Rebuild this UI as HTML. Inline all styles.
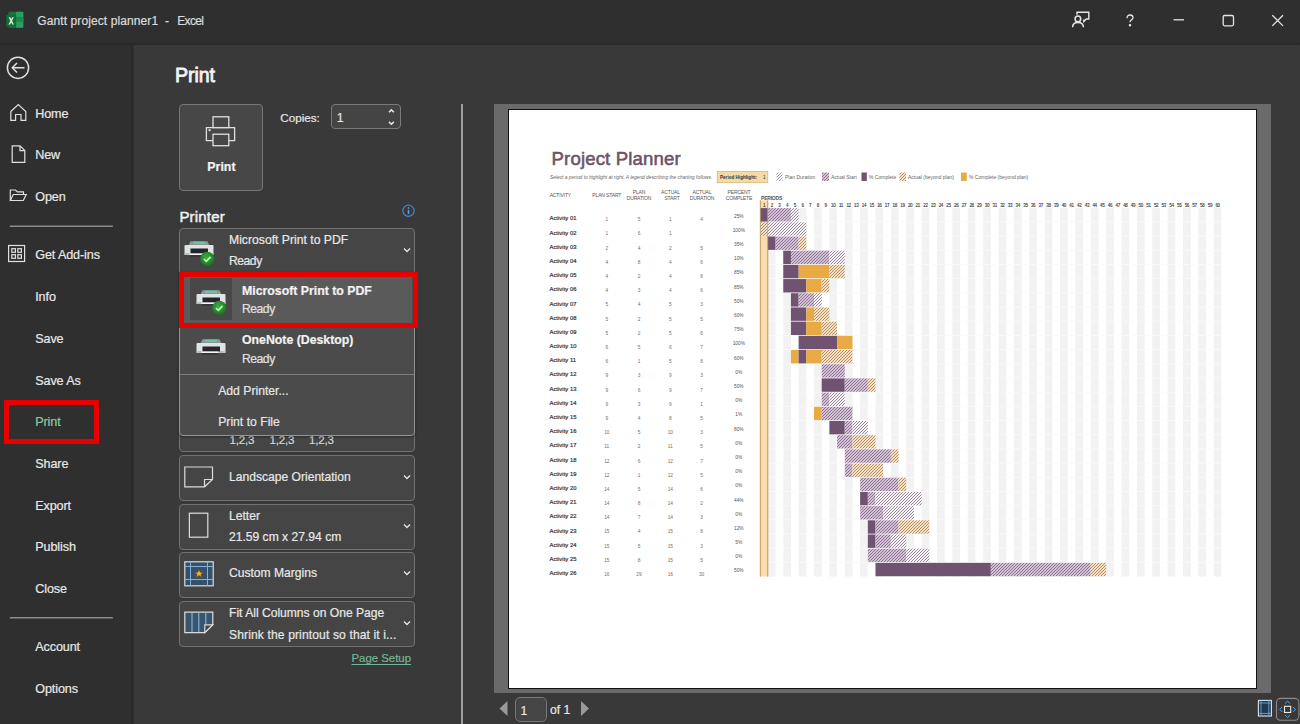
<!DOCTYPE html>
<html><head><meta charset="utf-8"><style>
html,body{margin:0;padding:0;width:1300px;height:724px;overflow:hidden;background:#383838;font-family:"Liberation Sans", sans-serif;}
.r{position:absolute;}
.t{position:absolute;white-space:nowrap;-webkit-text-stroke:0.2px currentColor;}
</style></head><body>
<div class="r" style="left:0px;top:0px;width:1300px;height:45px;background:#2f2f2f;"></div>
<div class="r" style="left:0px;top:45px;width:133px;height:679px;background:#2f2f2f;"></div>
<div class="r" style="left:133px;top:45px;width:1167px;height:679px;background:#393939;"></div>
<div class="r" style="left:0px;top:42px;width:1300px;height:3px;background:linear-gradient(#2f2f2f,#262626);"></div>
<div class="r" style="left:130px;top:45px;width:4px;height:679px;background:linear-gradient(90deg,#2f2f2f,#282828 60%,#333);"></div>
<svg class="r" style="left:5px;top:10px" width="20" height="20" viewBox="0 0 20 20">
<rect x="3.3" y="1.8" width="15" height="16" rx="1.2" fill="#17753f"/>
<rect x="11" y="1.8" width="7.3" height="16" rx="1" fill="#2a9e5e"/>
<rect x="11" y="7" width="7.3" height="5" fill="#1f8a50"/>
<rect x="1.2" y="5" width="10" height="11.6" rx="1" fill="#0f6e3a"/>
<path d="M3.6 7.2 L5.2 7.2 L6.2 9.3 L7.2 7.2 L8.8 7.2 L7.0 10.8 L8.9 14.4 L7.3 14.4 L6.2 12.2 L5.1 14.4 L3.5 14.4 L5.4 10.8 Z" fill="#d8f5e0"/>
</svg><div class="t" style="left:37.30px;top:14.94px;font-size:12px;line-height:12px;color:#dcdcdc;letter-spacing:0.1px;">Gantt project planner1</div>
<div class="t" style="left:165.00px;top:14.94px;font-size:12px;line-height:12px;color:#dcdcdc;">-</div>
<div class="t" style="left:177.20px;top:14.94px;font-size:12px;line-height:12px;color:#dcdcdc;letter-spacing:-0.65px;">Excel</div>
<svg class="r" style="left:1060px;top:0px" width="240" height="45" viewBox="0 0 240 45" fill="none" stroke="#e6e6e6" stroke-width="1.3">
<path d="M17 14.8 V12.3 H28.8 V19 H26.3 L23.8 21.6 V19.6" stroke-width="1.4"/>
<circle cx="17.9" cy="18.9" r="2.8" stroke-width="1.5"/>
<path d="M12.6 27.3 C12.6 24.2 15 22.5 18 22.5 C21 22.5 23.4 24.2 23.4 27.3" stroke-width="1.5"/>
<path d="M67 18.2 C67 15.8 68.5 15 70 15 C71.6 15 73 16 73 17.7 C73 19.6 70 20 70 22.3" />
<circle cx="70" cy="25.2" r="0.6" fill="#e6e6e6"/>
<path d="M113.5 19.8 H124"/>
<rect x="163.2" y="15.5" width="10.3" height="10.3" rx="1.5"/>
<path d="M212.3 15.2 L223 25.9 M223 15.2 L212.3 25.9"/>
</svg><svg class="r" style="left:0px;top:45px" width="133" height="679" viewBox="0 45 133 679" fill="none" stroke="#e0e0e0" stroke-width="1.2">
<circle cx="18" cy="67.8" r="10.6" stroke-width="1.5"/>
<path d="M12.5 67.8 H24.5 M17 63 L12.3 67.8 L17 72.6" stroke-width="1.5"/>
<path d="M10.8 111.5 L18.3 104.5 L25.8 111.5 V120.3 H21 V114.5 H15.6 V120.3 H10.8 Z"/>
<path d="M12.2 145.8 H20 L24.8 150.6 V162.3 H12.2 Z M20 145.8 V150.6 H24.8"/>
<path d="M10.3 200.5 V190 H15.5 L17.3 191.8 H23.5 V194.5 M10.3 200.5 L13.3 194.5 H26.2 L23.3 200.5 Z"/>
<path d="M9.8 226.3 H112.8" stroke="#8c8c8c" stroke-width="1.6"/>
<rect x="8.6" y="245.5" width="16" height="16"/>
<rect x="11.8" y="248.7" width="3.6" height="3.6"/><rect x="17.8" y="248.7" width="3.6" height="3.6"/>
<rect x="11.8" y="254.7" width="3.6" height="3.6"/><rect x="17.8" y="254.7" width="3.6" height="3.6"/>
<path d="M9.8 617.8 H112.8" stroke="#8c8c8c" stroke-width="1.6"/>
</svg><div class="t" style="left:35.20px;top:107.73px;font-size:12.6px;line-height:12.6px;color:#e8e8e8;letter-spacing:-0.1px;">Home</div>
<div class="t" style="left:35.20px;top:148.83px;font-size:12.6px;line-height:12.6px;color:#e8e8e8;letter-spacing:-0.1px;">New</div>
<div class="t" style="left:35.20px;top:190.93px;font-size:12.6px;line-height:12.6px;color:#e8e8e8;letter-spacing:-0.1px;">Open</div>
<div class="t" style="left:35.20px;top:248.93px;font-size:12.6px;line-height:12.6px;color:#e8e8e8;letter-spacing:-0.1px;">Get Add-ins</div>
<div class="t" style="left:35.20px;top:291.13px;font-size:12.6px;line-height:12.6px;color:#e8e8e8;letter-spacing:-0.1px;">Info</div>
<div class="t" style="left:35.20px;top:333.03px;font-size:12.6px;line-height:12.6px;color:#e8e8e8;letter-spacing:-0.1px;">Save</div>
<div class="t" style="left:35.20px;top:374.93px;font-size:12.6px;line-height:12.6px;color:#e8e8e8;letter-spacing:-0.1px;">Save As</div>
<div class="t" style="left:35.20px;top:415.73px;font-size:12.6px;line-height:12.6px;color:#8fc9a5;letter-spacing:-0.1px;">Print</div>
<div class="t" style="left:35.20px;top:458.13px;font-size:12.6px;line-height:12.6px;color:#e8e8e8;letter-spacing:-0.1px;">Share</div>
<div class="t" style="left:35.20px;top:499.53px;font-size:12.6px;line-height:12.6px;color:#e8e8e8;letter-spacing:-0.1px;">Export</div>
<div class="t" style="left:35.20px;top:541.03px;font-size:12.6px;line-height:12.6px;color:#e8e8e8;letter-spacing:-0.1px;">Publish</div>
<div class="t" style="left:35.20px;top:582.53px;font-size:12.6px;line-height:12.6px;color:#e8e8e8;letter-spacing:-0.1px;">Close</div>
<div class="t" style="left:35.20px;top:641.43px;font-size:12.6px;line-height:12.6px;color:#e8e8e8;letter-spacing:-0.1px;">Account</div>
<div class="t" style="left:35.20px;top:683.13px;font-size:12.6px;line-height:12.6px;color:#e8e8e8;letter-spacing:-0.1px;">Options</div>
<div class="r" style="left:4px;top:400px;width:95px;height:44px;border:5.5px solid #e60000;box-sizing:border-box;border-radius:1px;"></div>
<div class="t" style="left:175.00px;top:65.61px;font-size:19.6px;line-height:19.6px;color:#f4f4f4;letter-spacing:-0.1px;-webkit-text-stroke:0.8px #f4f4f4;">Print</div>
<div class="r" style="left:179px;top:104px;width:84px;height:87px;background:#474747;border:1px solid #777;box-sizing:border-box;border-radius:4px;"></div>
<svg class="r" style="left:179px;top:104px" width="84" height="87" viewBox="179 104 84 87" fill="none" stroke="#e0e0e0" stroke-width="1.3">
<rect x="213" y="116.8" width="15.8" height="10.8"/>
<path d="M213 140.6 H206.4 V127.6 H234.6 V140.6 H228.8"/>
<rect x="213" y="134.2" width="15.8" height="11.5"/>
<circle cx="209.6" cy="130.2" r="0.5" fill="#e0e0e0"/>
</svg><div class="t" style="left:207.30px;top:160.50px;font-size:12.4px;line-height:12.4px;color:#f4f4f4;font-weight:bold;">Print</div>
<div class="t" style="left:280.20px;top:111.70px;font-size:11.7px;line-height:11.7px;color:#e6e6e6;">Copies:</div>
<div class="r" style="left:331px;top:104px;width:70px;height:25px;background:#444;border:1px solid #7a7a7a;box-sizing:border-box;border-radius:4px;"></div>
<div class="t" style="left:336.80px;top:112.30px;font-size:12.4px;line-height:12.4px;color:#e6e6e6;">1</div>
<svg class="r" style="left:380px;top:104px" width="20" height="25" fill="none" stroke="#e8e8e8" stroke-width="1.5">
<path d="M9 8.2 L11.4 5.9 L13.8 8.2"/><path d="M9 17.9 L11.4 20.2 L13.8 17.9"/></svg><div class="r" style="left:461px;top:104px;width:2px;height:620px;background:#9e9e9e;"></div>
<div class="t" style="left:179.40px;top:208.70px;font-size:15px;line-height:15px;color:#efefef;letter-spacing:0.2px;-webkit-text-stroke:0.5px #efefef;">Printer</div>
<svg class="r" style="left:400px;top:203px" width="17" height="16" fill="none">
<circle cx="8.5" cy="7.8" r="5.6" stroke="#3f86c8" stroke-width="1.3"/>
<path d="M8.5 6.8 V11" stroke="#5aa0e0" stroke-width="1.5"/><circle cx="8.5" cy="4.9" r="0.85" fill="#5aa0e0"/></svg><div class="r" style="left:179px;top:228px;width:236px;height:60px;background:#454545;border:1px solid #717171;box-sizing:border-box;border-radius:4px;"></div>
<svg class="r" style="left:184px;top:240px" width="32" height="28" viewBox="0 0 32 28"><path d="M4.5 5.5 L6.5 1.2 H23.5 L25.5 5.5 Z" fill="#8e9696"/><rect x="9" y="1.6" width="12" height="2.2" fill="#6cc4aa"/><rect x="0.5" y="5" width="29" height="10" rx="1" fill="#dfe3e3"/><rect x="0.5" y="13" width="29" height="2" fill="#b9c0c0"/><rect x="6.5" y="8.5" width="17.5" height="5" fill="#23252b"/><rect x="5.5" y="13.5" width="17" height="1.8" fill="#f4f4f4"/><rect x="5.5" y="15.3" width="17" height="1" fill="#1c1c1c"/><defs><radialGradient id="cg" cx="0.45" cy="0.4" r="0.6"><stop offset="0" stop-color="#3cb043"/><stop offset="1" stop-color="#16781c"/></radialGradient></defs><circle cx="23.3" cy="18.8" r="7" fill="url(#cg)"/><path d="M19.9 19 L22.3 21.3 L26.6 16.8" fill="none" stroke="#c8f5c0" stroke-width="1.7"/></svg>
<div class="t" style="left:229.00px;top:234.07px;font-size:12.2px;line-height:12.2px;color:#e8e8e8;">Microsoft Print to PDF</div>
<div class="t" style="left:229.00px;top:254.67px;font-size:12.2px;line-height:12.2px;color:#e8e8e8;letter-spacing:-0.5px;">Ready</div>
<svg class="r" style="left:400px;top:244px" width="14" height="12" fill="none" stroke="#e6e6e6" stroke-width="1.3"><path d="M4 4.5 L7 7.5 L10 4.5"/></svg>
<div class="r" style="left:179px;top:400px;width:236px;height:52px;background:#454545;border:1px solid #717171;box-sizing:border-box;border-radius:4px;"></div>
<div class="t" style="left:229.50px;top:434.87px;font-size:11.5px;line-height:11.5px;color:#d8d8d8;letter-spacing:-0.2px;">1,2,3</div>
<div class="t" style="left:269.50px;top:434.87px;font-size:11.5px;line-height:11.5px;color:#d8d8d8;letter-spacing:-0.2px;">1,2,3</div>
<div class="t" style="left:309.00px;top:434.87px;font-size:11.5px;line-height:11.5px;color:#d8d8d8;letter-spacing:-0.2px;">1,2,3</div>
<div class="r" style="left:179px;top:272px;width:236px;height:164px;background:#4b4b4b;border:1px solid #959595;box-sizing:border-box;border-radius:0 0 4px 4px;box-shadow:0 1px 3px rgba(0,0,0,0.4);"></div>
<div class="r" style="left:183px;top:276px;width:229px;height:47px;background:#5a5a5a;"></div>
<div class="r" style="left:190px;top:278px;width:42px;height:42px;background:#484848;"></div>
<svg class="r" style="left:196px;top:289px" width="32" height="28" viewBox="0 0 32 28"><path d="M4.5 5.5 L6.5 1.2 H23.5 L25.5 5.5 Z" fill="#8e9696"/><rect x="9" y="1.6" width="12" height="2.2" fill="#6cc4aa"/><rect x="0.5" y="5" width="29" height="10" rx="1" fill="#dfe3e3"/><rect x="0.5" y="13" width="29" height="2" fill="#b9c0c0"/><rect x="6.5" y="8.5" width="17.5" height="5" fill="#23252b"/><rect x="5.5" y="13.5" width="17" height="1.8" fill="#f4f4f4"/><rect x="5.5" y="15.3" width="17" height="1" fill="#1c1c1c"/><defs><radialGradient id="cg" cx="0.45" cy="0.4" r="0.6"><stop offset="0" stop-color="#3cb043"/><stop offset="1" stop-color="#16781c"/></radialGradient></defs><circle cx="23.3" cy="18.8" r="7" fill="url(#cg)"/><path d="M19.9 19 L22.3 21.3 L26.6 16.8" fill="none" stroke="#c8f5c0" stroke-width="1.7"/></svg>
<div class="t" style="left:242.00px;top:284.99px;font-size:12.3px;line-height:12.3px;color:#f2f2f2;font-weight:bold;">Microsoft Print to PDF</div>
<div class="t" style="left:242.00px;top:303.27px;font-size:12.2px;line-height:12.2px;color:#e0e0e0;letter-spacing:-0.5px;">Ready</div>
<div class="r" style="left:178.5px;top:271.5px;width:239px;height:56px;border:5px solid #e60000;box-sizing:border-box;"></div>
<svg class="r" style="left:196px;top:338px" width="32" height="28" viewBox="0 0 32 28"><path d="M4.5 5.5 L6.5 1.2 H23.5 L25.5 5.5 Z" fill="#8e9696"/><rect x="9" y="1.6" width="12" height="2.2" fill="#6cc4aa"/><rect x="0.5" y="5" width="29" height="10" rx="1" fill="#dfe3e3"/><rect x="0.5" y="13" width="29" height="2" fill="#b9c0c0"/><rect x="6.5" y="8.5" width="17.5" height="5" fill="#23252b"/><rect x="5.5" y="13.5" width="17" height="1.8" fill="#f4f4f4"/><rect x="5.5" y="15.3" width="17" height="1" fill="#1c1c1c"/></svg>
<div class="t" style="left:242.00px;top:334.39px;font-size:12.3px;line-height:12.3px;color:#f2f2f2;font-weight:bold;">OneNote (Desktop)</div>
<div class="t" style="left:242.00px;top:352.77px;font-size:12.2px;line-height:12.2px;color:#e0e0e0;letter-spacing:-0.5px;">Ready</div>
<div class="r" style="left:180px;top:374px;width:234px;height:1px;background:#7c7c7c;"></div>
<div class="t" style="left:218.20px;top:385.17px;font-size:12.2px;line-height:12.2px;color:#e6e6e6;">Add Printer...</div>
<div class="t" style="left:218.20px;top:415.67px;font-size:12.2px;line-height:12.2px;color:#e6e6e6;">Print to File</div>
<div class="r" style="left:179px;top:455px;width:236px;height:46px;background:#454545;border:1px solid #717171;box-sizing:border-box;border-radius:4px;"></div>
<svg class="r" style="left:184px;top:466px" width="30" height="22" fill="none" stroke="#dcdcdc" stroke-width="1.2"><path d="M0.8 1 H28.5 V13.5 L20.5 20.8 H0.8 Z M20.5 20.8 V13.5 H28.5"/></svg>
<div class="t" style="left:229.00px;top:470.56px;font-size:12.1px;line-height:12.1px;color:#e8e8e8;">Landscape Orientation</div>
<svg class="r" style="left:400px;top:471px" width="14" height="12" fill="none" stroke="#e6e6e6" stroke-width="1.3"><path d="M4 4.5 L7 7.5 L10 4.5"/></svg>
<div class="r" style="left:179px;top:503.5px;width:236px;height:46px;background:#454545;border:1px solid #717171;box-sizing:border-box;border-radius:4px;"></div>
<svg class="r" style="left:188px;top:512px" width="22" height="27" fill="none" stroke="#dcdcdc" stroke-width="1.2"><rect x="1.4" y="1.2" width="18.4" height="24"/></svg>
<div class="t" style="left:229.00px;top:509.96px;font-size:12.1px;line-height:12.1px;color:#e8e8e8;">Letter</div>
<div class="t" style="left:229.00px;top:531.16px;font-size:12.1px;line-height:12.1px;color:#e8e8e8;">21.59 cm x 27.94 cm</div>
<svg class="r" style="left:400px;top:520px" width="14" height="12" fill="none" stroke="#e6e6e6" stroke-width="1.3"><path d="M4 4.5 L7 7.5 L10 4.5"/></svg>
<div class="r" style="left:179px;top:552px;width:236px;height:46px;background:#454545;border:1px solid #717171;box-sizing:border-box;border-radius:4px;"></div>
<svg class="r" style="left:184px;top:561px" width="30" height="26">
<rect x="0.8" y="0.8" width="28.4" height="24" fill="#34506a" stroke="#dcdcdc" stroke-width="1.2"/>
<path d="M1 5.5 H29 M1 18.5 H29 M6.5 1 V25 M23.5 1 V25" stroke="#7fb3dc" stroke-width="1"/>
<path d="M15 8.5 L16.2 11.3 L19.2 11.4 L16.9 13.3 L17.7 16.2 L15 14.5 L12.3 16.2 L13.1 13.3 L10.8 11.4 L13.8 11.3 Z" fill="#f2b233" stroke="#7a4a10" stroke-width="0.6"/>
</svg><div class="t" style="left:229.00px;top:567.06px;font-size:12.1px;line-height:12.1px;color:#e8e8e8;">Custom Margins</div>
<svg class="r" style="left:400px;top:567px" width="14" height="12" fill="none" stroke="#e6e6e6" stroke-width="1.3"><path d="M4 4.5 L7 7.5 L10 4.5"/></svg>
<div class="r" style="left:179px;top:600.5px;width:236px;height:46px;background:#454545;border:1px solid #717171;box-sizing:border-box;border-radius:4px;"></div>
<svg class="r" style="left:184px;top:611px" width="30" height="24">
<path d="M0.8 1.2 H28.8 V13.8 L20.8 21.6 H0.8 Z" fill="#3a566f" stroke="#dcdcdc" stroke-width="1.2"/>
<path d="M8 1.5 V21.3 M14.8 1.5 V21.3 M21.8 1.5 V13.8" stroke="#8ab8dc" stroke-width="1.1"/>
<path d="M20.8 21.6 V13.8 H28.8 Z" fill="#454545" stroke="#dcdcdc" stroke-width="1.2"/>
</svg><div class="t" style="left:229.00px;top:607.46px;font-size:12.1px;line-height:12.1px;color:#e8e8e8;">Fit All Columns on One Page</div>
<div class="t" style="left:229.00px;top:628.66px;font-size:12.1px;line-height:12.1px;color:#e8e8e8;letter-spacing:0.12px;">Shrink the printout so that it i...</div>
<svg class="r" style="left:400px;top:617px" width="14" height="12" fill="none" stroke="#e6e6e6" stroke-width="1.3"><path d="M4 4.5 L7 7.5 L10 4.5"/></svg>
<div class="t" style="left:351.50px;top:653.25px;font-size:11.4px;line-height:11.4px;color:#74b595;text-decoration:underline;text-decoration-skip-ink:none;text-underline-offset:1.6px;text-decoration-thickness:1px;">Page Setup</div>
<div class="r" style="left:494px;top:104px;width:777px;height:589px;background:#6a6a6a;"></div>
<div class="r" style="left:508px;top:109px;width:749px;height:580px;background:#fff;border:1.5px solid #111;box-sizing:border-box;"></div>
<svg class="r" style="left:495px;top:698px" width="100" height="24"><path d="M12.5 3 V18 L4.5 10.5 Z" fill="#9a9a9a"/><path d="M86 3 V18 L94 10.5 Z" fill="#9a9a9a"/></svg>
<div class="r" style="left:515px;top:696.5px;width:32px;height:25.5px;background:#454545;border:1px solid #777;box-sizing:border-box;border-radius:5px;"></div>
<div class="t" style="left:520.50px;top:704.77px;font-size:12.2px;line-height:12.2px;color:#e8e8e8;">1</div>
<div class="t" style="left:550.00px;top:703.77px;font-size:12.2px;line-height:12.2px;color:#e8e8e8;">of 1</div>
<svg class="r" style="left:1255px;top:696px" width="45" height="28" fill="none">
<rect x="3.4" y="4.4" width="13" height="15.6" fill="#24384d" stroke="#dfe6ee" stroke-width="1.1"/>
<path d="M6 4.5 V20 M13.8 4.5 V20 M3.5 7 H16.3 M3.5 17.4 H16.3" stroke="#5fa8e0" stroke-width="0.9"/>
<rect x="21.5" y="2.4" width="22.4" height="21.8" rx="4" stroke="#8a8a8a" stroke-width="1.1" fill="#383838"/>
<rect x="29.5" y="10.3" width="6.2" height="6.2" stroke="#eaeaea" stroke-width="1.1"/>
<path d="M30.2 7.5 L32.6 5.2 L35 7.5 M30.2 19.2 L32.6 21.5 L35 19.2 M27 11 L24.8 13.4 L27 15.8 M38.2 11 L40.4 13.4 L38.2 15.8" stroke="#5fa8e0" stroke-width="1"/>
</svg><svg class="r" style="left:0;top:0" width="1300" height="724" viewBox="0 0 1300 724">
<defs>
<pattern id="pP" patternUnits="userSpaceOnUse" width="3" height="3">
<rect x="0" y="2" width="1" height="1" fill="#968c98"/><rect x="1" y="1" width="1" height="1" fill="#968c98"/><rect x="2" y="0" width="1" height="1" fill="#968c98"/></pattern>
<pattern id="pL" patternUnits="userSpaceOnUse" width="3" height="3">
<rect width="3" height="3" fill="#d2bfd5"/><rect x="0" y="2" width="1" height="1" fill="#8e7791"/><rect x="1" y="1" width="1" height="1" fill="#8e7791"/><rect x="2" y="0" width="1" height="1" fill="#8e7791"/></pattern>
<pattern id="pH" patternUnits="userSpaceOnUse" width="3" height="3">
<rect width="3" height="3" fill="#f5dfbd"/><rect x="0" y="2" width="1" height="1" fill="#b09272"/><rect x="1" y="1" width="1" height="1" fill="#b09272"/><rect x="2" y="0" width="1" height="1" fill="#b09272"/></pattern>
<pattern id="pLeg" patternUnits="userSpaceOnUse" width="3" height="3">
<rect width="3" height="3" fill="#ffffff"/><rect x="0" y="2" width="1" height="1" fill="#968c98"/><rect x="1" y="1" width="1" height="1" fill="#968c98"/><rect x="2" y="0" width="1" height="1" fill="#968c98"/></pattern>
</defs>
<rect x="767.89" y="208.10" width="7.69" height="368.40" fill="#f2f2f2"/>
<rect x="783.26" y="208.10" width="7.69" height="368.40" fill="#f2f2f2"/>
<rect x="798.64" y="208.10" width="7.69" height="368.40" fill="#f2f2f2"/>
<rect x="814.02" y="208.10" width="7.69" height="368.40" fill="#f2f2f2"/>
<rect x="829.39" y="208.10" width="7.69" height="368.40" fill="#f2f2f2"/>
<rect x="844.77" y="208.10" width="7.69" height="368.40" fill="#f2f2f2"/>
<rect x="860.14" y="208.10" width="7.69" height="368.40" fill="#f2f2f2"/>
<rect x="875.52" y="208.10" width="7.69" height="368.40" fill="#f2f2f2"/>
<rect x="890.90" y="208.10" width="7.69" height="368.40" fill="#f2f2f2"/>
<rect x="906.27" y="208.10" width="7.69" height="368.40" fill="#f2f2f2"/>
<rect x="921.65" y="208.10" width="7.69" height="368.40" fill="#f2f2f2"/>
<rect x="937.02" y="208.10" width="7.69" height="368.40" fill="#f2f2f2"/>
<rect x="952.40" y="208.10" width="7.69" height="368.40" fill="#f2f2f2"/>
<rect x="967.78" y="208.10" width="7.69" height="368.40" fill="#f2f2f2"/>
<rect x="983.15" y="208.10" width="7.69" height="368.40" fill="#f2f2f2"/>
<rect x="998.53" y="208.10" width="7.69" height="368.40" fill="#f2f2f2"/>
<rect x="1013.90" y="208.10" width="7.69" height="368.40" fill="#f2f2f2"/>
<rect x="1029.28" y="208.10" width="7.69" height="368.40" fill="#f2f2f2"/>
<rect x="1044.66" y="208.10" width="7.69" height="368.40" fill="#f2f2f2"/>
<rect x="1060.03" y="208.10" width="7.69" height="368.40" fill="#f2f2f2"/>
<rect x="1075.41" y="208.10" width="7.69" height="368.40" fill="#f2f2f2"/>
<rect x="1090.78" y="208.10" width="7.69" height="368.40" fill="#f2f2f2"/>
<rect x="1106.16" y="208.10" width="7.69" height="368.40" fill="#f2f2f2"/>
<rect x="1121.54" y="208.10" width="7.69" height="368.40" fill="#f2f2f2"/>
<rect x="1136.91" y="208.10" width="7.69" height="368.40" fill="#f2f2f2"/>
<rect x="1152.29" y="208.10" width="7.69" height="368.40" fill="#f2f2f2"/>
<rect x="1167.66" y="208.10" width="7.69" height="368.40" fill="#f2f2f2"/>
<rect x="1183.04" y="208.10" width="7.69" height="368.40" fill="#f2f2f2"/>
<rect x="1198.42" y="208.10" width="7.69" height="368.40" fill="#f2f2f2"/>
<rect x="1213.79" y="208.10" width="7.69" height="368.40" fill="#f2f2f2"/>
<rect x="760.20" y="221.49" width="461.28" height="0.8" fill="#fafafa"/>
<rect x="760.20" y="235.68" width="461.28" height="0.8" fill="#fafafa"/>
<rect x="760.20" y="249.87" width="461.28" height="0.8" fill="#fafafa"/>
<rect x="760.20" y="264.06" width="461.28" height="0.8" fill="#fafafa"/>
<rect x="760.20" y="278.25" width="461.28" height="0.8" fill="#fafafa"/>
<rect x="760.20" y="292.44" width="461.28" height="0.8" fill="#fafafa"/>
<rect x="760.20" y="306.63" width="461.28" height="0.8" fill="#fafafa"/>
<rect x="760.20" y="320.82" width="461.28" height="0.8" fill="#fafafa"/>
<rect x="760.20" y="335.01" width="461.28" height="0.8" fill="#fafafa"/>
<rect x="760.20" y="349.20" width="461.28" height="0.8" fill="#fafafa"/>
<rect x="760.20" y="363.39" width="461.28" height="0.8" fill="#fafafa"/>
<rect x="760.20" y="377.58" width="461.28" height="0.8" fill="#fafafa"/>
<rect x="760.20" y="391.77" width="461.28" height="0.8" fill="#fafafa"/>
<rect x="760.20" y="405.96" width="461.28" height="0.8" fill="#fafafa"/>
<rect x="760.20" y="420.15" width="461.28" height="0.8" fill="#fafafa"/>
<rect x="760.20" y="434.34" width="461.28" height="0.8" fill="#fafafa"/>
<rect x="760.20" y="448.53" width="461.28" height="0.8" fill="#fafafa"/>
<rect x="760.20" y="462.72" width="461.28" height="0.8" fill="#fafafa"/>
<rect x="760.20" y="476.91" width="461.28" height="0.8" fill="#fafafa"/>
<rect x="760.20" y="491.10" width="461.28" height="0.8" fill="#fafafa"/>
<rect x="760.20" y="505.29" width="461.28" height="0.8" fill="#fafafa"/>
<rect x="760.20" y="519.48" width="461.28" height="0.8" fill="#fafafa"/>
<rect x="760.20" y="533.67" width="461.28" height="0.8" fill="#fafafa"/>
<rect x="760.20" y="547.86" width="461.28" height="0.8" fill="#fafafa"/>
<rect x="760.20" y="562.05" width="461.28" height="0.8" fill="#fafafa"/>
<rect x="760.20" y="200.4" width="7.69" height="376.10" fill="#f8dcaf"/>
<rect x="759.90" y="200.4" width="0.9" height="376.10" fill="#c9a46a"/>
<rect x="767.29" y="200.4" width="0.9" height="376.10" fill="#c9a46a"/>
<rect x="760.20" y="208.10" width="7.69" height="13.40" fill="#6f5371"/>
<rect x="767.89" y="208.10" width="23.06" height="13.40" fill="url(#pL)"/>
<rect x="790.95" y="208.10" width="7.69" height="13.40" fill="#f7f1f7"/>
<rect x="790.95" y="208.10" width="7.69" height="13.40" fill="url(#pP)"/>
<rect x="760.20" y="222.29" width="7.69" height="13.40" fill="#f8e2bd"/>
<rect x="767.89" y="222.29" width="38.44" height="13.40" fill="#f7f1f7"/>
<rect x="760.20" y="222.29" width="46.13" height="13.40" fill="url(#pP)"/>
<rect x="767.89" y="236.48" width="7.69" height="13.40" fill="#6f5371"/>
<rect x="775.58" y="236.48" width="23.06" height="13.40" fill="url(#pL)"/>
<rect x="798.64" y="236.48" width="7.69" height="13.40" fill="url(#pH)"/>
<rect x="783.26" y="250.67" width="7.69" height="13.40" fill="#6f5371"/>
<rect x="790.95" y="250.67" width="38.44" height="13.40" fill="url(#pL)"/>
<rect x="829.39" y="250.67" width="15.38" height="13.40" fill="#f7f1f7"/>
<rect x="829.39" y="250.67" width="15.38" height="13.40" fill="url(#pP)"/>
<rect x="783.26" y="264.86" width="15.38" height="13.40" fill="#6f5371"/>
<rect x="798.64" y="264.86" width="30.75" height="13.40" fill="#e9aa45"/>
<rect x="829.39" y="264.86" width="15.38" height="13.40" fill="url(#pH)"/>
<rect x="783.26" y="279.05" width="23.06" height="13.40" fill="#6f5371"/>
<rect x="806.33" y="279.05" width="15.38" height="13.40" fill="#e9aa45"/>
<rect x="821.70" y="279.05" width="7.69" height="13.40" fill="url(#pH)"/>
<rect x="790.95" y="293.24" width="7.69" height="13.40" fill="#6f5371"/>
<rect x="798.64" y="293.24" width="15.38" height="13.40" fill="url(#pL)"/>
<rect x="814.02" y="293.24" width="7.69" height="13.40" fill="#f7f1f7"/>
<rect x="814.02" y="293.24" width="7.69" height="13.40" fill="url(#pP)"/>
<rect x="790.95" y="307.43" width="15.38" height="13.40" fill="#6f5371"/>
<rect x="806.33" y="307.43" width="7.69" height="13.40" fill="#e9aa45"/>
<rect x="814.02" y="307.43" width="15.38" height="13.40" fill="url(#pH)"/>
<rect x="790.95" y="321.62" width="15.38" height="13.40" fill="#6f5371"/>
<rect x="806.33" y="321.62" width="15.38" height="13.40" fill="#e9aa45"/>
<rect x="821.70" y="321.62" width="15.38" height="13.40" fill="url(#pH)"/>
<rect x="798.64" y="335.81" width="38.44" height="13.40" fill="#6f5371"/>
<rect x="837.08" y="335.81" width="15.38" height="13.40" fill="#e9aa45"/>
<rect x="790.95" y="350.00" width="7.69" height="13.40" fill="#e9aa45"/>
<rect x="798.64" y="350.00" width="7.69" height="13.40" fill="#6f5371"/>
<rect x="806.33" y="350.00" width="15.38" height="13.40" fill="#e9aa45"/>
<rect x="821.70" y="350.00" width="30.75" height="13.40" fill="url(#pH)"/>
<rect x="821.70" y="364.19" width="23.06" height="13.40" fill="url(#pL)"/>
<rect x="821.70" y="378.38" width="23.06" height="13.40" fill="#6f5371"/>
<rect x="844.77" y="378.38" width="23.06" height="13.40" fill="url(#pL)"/>
<rect x="867.83" y="378.38" width="7.69" height="13.40" fill="url(#pH)"/>
<rect x="821.70" y="392.57" width="7.69" height="13.40" fill="url(#pL)"/>
<rect x="829.39" y="392.57" width="15.38" height="13.40" fill="#f7f1f7"/>
<rect x="829.39" y="392.57" width="15.38" height="13.40" fill="url(#pP)"/>
<rect x="814.02" y="406.76" width="7.69" height="13.40" fill="#e9aa45"/>
<rect x="821.70" y="406.76" width="30.75" height="13.40" fill="url(#pL)"/>
<rect x="829.39" y="420.95" width="15.38" height="13.40" fill="#6f5371"/>
<rect x="844.77" y="420.95" width="7.69" height="13.40" fill="url(#pL)"/>
<rect x="852.46" y="420.95" width="15.38" height="13.40" fill="#f7f1f7"/>
<rect x="852.46" y="420.95" width="15.38" height="13.40" fill="url(#pP)"/>
<rect x="837.08" y="435.14" width="15.38" height="13.40" fill="url(#pL)"/>
<rect x="852.46" y="435.14" width="23.06" height="13.40" fill="url(#pH)"/>
<rect x="844.77" y="449.33" width="46.13" height="13.40" fill="url(#pL)"/>
<rect x="890.90" y="449.33" width="7.69" height="13.40" fill="url(#pH)"/>
<rect x="844.77" y="463.52" width="7.69" height="13.40" fill="url(#pL)"/>
<rect x="852.46" y="463.52" width="30.75" height="13.40" fill="url(#pH)"/>
<rect x="860.14" y="477.71" width="38.44" height="13.40" fill="url(#pL)"/>
<rect x="898.58" y="477.71" width="7.69" height="13.40" fill="url(#pH)"/>
<rect x="860.14" y="491.90" width="7.69" height="13.40" fill="#6f5371"/>
<rect x="867.83" y="491.90" width="7.69" height="13.40" fill="url(#pL)"/>
<rect x="875.52" y="491.90" width="46.13" height="13.40" fill="#f7f1f7"/>
<rect x="875.52" y="491.90" width="46.13" height="13.40" fill="url(#pP)"/>
<rect x="860.14" y="506.09" width="23.06" height="13.40" fill="url(#pL)"/>
<rect x="883.21" y="506.09" width="30.75" height="13.40" fill="#f7f1f7"/>
<rect x="883.21" y="506.09" width="30.75" height="13.40" fill="url(#pP)"/>
<rect x="867.83" y="520.28" width="7.69" height="13.40" fill="#6f5371"/>
<rect x="875.52" y="520.28" width="23.06" height="13.40" fill="url(#pL)"/>
<rect x="898.58" y="520.28" width="30.75" height="13.40" fill="url(#pH)"/>
<rect x="867.83" y="534.47" width="7.69" height="13.40" fill="#6f5371"/>
<rect x="875.52" y="534.47" width="15.38" height="13.40" fill="url(#pL)"/>
<rect x="890.90" y="534.47" width="15.38" height="13.40" fill="#f7f1f7"/>
<rect x="890.90" y="534.47" width="15.38" height="13.40" fill="url(#pP)"/>
<rect x="867.83" y="548.66" width="38.44" height="13.40" fill="url(#pL)"/>
<rect x="906.27" y="548.66" width="23.06" height="13.40" fill="#f7f1f7"/>
<rect x="906.27" y="548.66" width="23.06" height="13.40" fill="url(#pP)"/>
<rect x="875.52" y="562.85" width="115.32" height="13.40" fill="#6f5371"/>
<rect x="990.84" y="562.85" width="99.94" height="13.40" fill="url(#pL)"/>
<rect x="1090.78" y="562.85" width="15.38" height="13.40" fill="url(#pH)"/>
<rect x="759.90" y="200.4" width="0.9" height="376.10" fill="#c9a46a" opacity="0.8"/>
<rect x="767.29" y="200.4" width="0.9" height="376.10" fill="#c9a46a" opacity="0.8"/>
<text x="764.04" y="207.2" font-size="4.5" text-anchor="middle" fill="#404040" letter-spacing="-0.3" stroke="#404040" stroke-width="0.12">1</text>
<text x="771.73" y="207.2" font-size="4.5" text-anchor="middle" fill="#404040" letter-spacing="-0.3" stroke="#404040" stroke-width="0.12">2</text>
<text x="779.42" y="207.2" font-size="4.5" text-anchor="middle" fill="#404040" letter-spacing="-0.3" stroke="#404040" stroke-width="0.12">3</text>
<text x="787.11" y="207.2" font-size="4.5" text-anchor="middle" fill="#404040" letter-spacing="-0.3" stroke="#404040" stroke-width="0.12">4</text>
<text x="794.80" y="207.2" font-size="4.5" text-anchor="middle" fill="#404040" letter-spacing="-0.3" stroke="#404040" stroke-width="0.12">5</text>
<text x="802.48" y="207.2" font-size="4.5" text-anchor="middle" fill="#404040" letter-spacing="-0.3" stroke="#404040" stroke-width="0.12">6</text>
<text x="810.17" y="207.2" font-size="4.5" text-anchor="middle" fill="#404040" letter-spacing="-0.3" stroke="#404040" stroke-width="0.12">7</text>
<text x="817.86" y="207.2" font-size="4.5" text-anchor="middle" fill="#404040" letter-spacing="-0.3" stroke="#404040" stroke-width="0.12">8</text>
<text x="825.55" y="207.2" font-size="4.5" text-anchor="middle" fill="#404040" letter-spacing="-0.3" stroke="#404040" stroke-width="0.12">9</text>
<text x="833.24" y="207.2" font-size="4.5" text-anchor="middle" fill="#404040" letter-spacing="-0.3" stroke="#404040" stroke-width="0.12">10</text>
<text x="840.92" y="207.2" font-size="4.5" text-anchor="middle" fill="#404040" letter-spacing="-0.3" stroke="#404040" stroke-width="0.12">11</text>
<text x="848.61" y="207.2" font-size="4.5" text-anchor="middle" fill="#404040" letter-spacing="-0.3" stroke="#404040" stroke-width="0.12">12</text>
<text x="856.30" y="207.2" font-size="4.5" text-anchor="middle" fill="#404040" letter-spacing="-0.3" stroke="#404040" stroke-width="0.12">13</text>
<text x="863.99" y="207.2" font-size="4.5" text-anchor="middle" fill="#404040" letter-spacing="-0.3" stroke="#404040" stroke-width="0.12">14</text>
<text x="871.68" y="207.2" font-size="4.5" text-anchor="middle" fill="#404040" letter-spacing="-0.3" stroke="#404040" stroke-width="0.12">15</text>
<text x="879.36" y="207.2" font-size="4.5" text-anchor="middle" fill="#404040" letter-spacing="-0.3" stroke="#404040" stroke-width="0.12">16</text>
<text x="887.05" y="207.2" font-size="4.5" text-anchor="middle" fill="#404040" letter-spacing="-0.3" stroke="#404040" stroke-width="0.12">17</text>
<text x="894.74" y="207.2" font-size="4.5" text-anchor="middle" fill="#404040" letter-spacing="-0.3" stroke="#404040" stroke-width="0.12">18</text>
<text x="902.43" y="207.2" font-size="4.5" text-anchor="middle" fill="#404040" letter-spacing="-0.3" stroke="#404040" stroke-width="0.12">19</text>
<text x="910.12" y="207.2" font-size="4.5" text-anchor="middle" fill="#404040" letter-spacing="-0.3" stroke="#404040" stroke-width="0.12">20</text>
<text x="917.80" y="207.2" font-size="4.5" text-anchor="middle" fill="#404040" letter-spacing="-0.3" stroke="#404040" stroke-width="0.12">21</text>
<text x="925.49" y="207.2" font-size="4.5" text-anchor="middle" fill="#404040" letter-spacing="-0.3" stroke="#404040" stroke-width="0.12">22</text>
<text x="933.18" y="207.2" font-size="4.5" text-anchor="middle" fill="#404040" letter-spacing="-0.3" stroke="#404040" stroke-width="0.12">23</text>
<text x="940.87" y="207.2" font-size="4.5" text-anchor="middle" fill="#404040" letter-spacing="-0.3" stroke="#404040" stroke-width="0.12">24</text>
<text x="948.56" y="207.2" font-size="4.5" text-anchor="middle" fill="#404040" letter-spacing="-0.3" stroke="#404040" stroke-width="0.12">25</text>
<text x="956.24" y="207.2" font-size="4.5" text-anchor="middle" fill="#404040" letter-spacing="-0.3" stroke="#404040" stroke-width="0.12">26</text>
<text x="963.93" y="207.2" font-size="4.5" text-anchor="middle" fill="#404040" letter-spacing="-0.3" stroke="#404040" stroke-width="0.12">27</text>
<text x="971.62" y="207.2" font-size="4.5" text-anchor="middle" fill="#404040" letter-spacing="-0.3" stroke="#404040" stroke-width="0.12">28</text>
<text x="979.31" y="207.2" font-size="4.5" text-anchor="middle" fill="#404040" letter-spacing="-0.3" stroke="#404040" stroke-width="0.12">29</text>
<text x="987.00" y="207.2" font-size="4.5" text-anchor="middle" fill="#404040" letter-spacing="-0.3" stroke="#404040" stroke-width="0.12">30</text>
<text x="994.68" y="207.2" font-size="4.5" text-anchor="middle" fill="#404040" letter-spacing="-0.3" stroke="#404040" stroke-width="0.12">31</text>
<text x="1002.37" y="207.2" font-size="4.5" text-anchor="middle" fill="#404040" letter-spacing="-0.3" stroke="#404040" stroke-width="0.12">32</text>
<text x="1010.06" y="207.2" font-size="4.5" text-anchor="middle" fill="#404040" letter-spacing="-0.3" stroke="#404040" stroke-width="0.12">33</text>
<text x="1017.75" y="207.2" font-size="4.5" text-anchor="middle" fill="#404040" letter-spacing="-0.3" stroke="#404040" stroke-width="0.12">34</text>
<text x="1025.44" y="207.2" font-size="4.5" text-anchor="middle" fill="#404040" letter-spacing="-0.3" stroke="#404040" stroke-width="0.12">35</text>
<text x="1033.12" y="207.2" font-size="4.5" text-anchor="middle" fill="#404040" letter-spacing="-0.3" stroke="#404040" stroke-width="0.12">36</text>
<text x="1040.81" y="207.2" font-size="4.5" text-anchor="middle" fill="#404040" letter-spacing="-0.3" stroke="#404040" stroke-width="0.12">37</text>
<text x="1048.50" y="207.2" font-size="4.5" text-anchor="middle" fill="#404040" letter-spacing="-0.3" stroke="#404040" stroke-width="0.12">38</text>
<text x="1056.19" y="207.2" font-size="4.5" text-anchor="middle" fill="#404040" letter-spacing="-0.3" stroke="#404040" stroke-width="0.12">39</text>
<text x="1063.88" y="207.2" font-size="4.5" text-anchor="middle" fill="#404040" letter-spacing="-0.3" stroke="#404040" stroke-width="0.12">40</text>
<text x="1071.56" y="207.2" font-size="4.5" text-anchor="middle" fill="#404040" letter-spacing="-0.3" stroke="#404040" stroke-width="0.12">41</text>
<text x="1079.25" y="207.2" font-size="4.5" text-anchor="middle" fill="#404040" letter-spacing="-0.3" stroke="#404040" stroke-width="0.12">42</text>
<text x="1086.94" y="207.2" font-size="4.5" text-anchor="middle" fill="#404040" letter-spacing="-0.3" stroke="#404040" stroke-width="0.12">43</text>
<text x="1094.63" y="207.2" font-size="4.5" text-anchor="middle" fill="#404040" letter-spacing="-0.3" stroke="#404040" stroke-width="0.12">44</text>
<text x="1102.32" y="207.2" font-size="4.5" text-anchor="middle" fill="#404040" letter-spacing="-0.3" stroke="#404040" stroke-width="0.12">45</text>
<text x="1110.00" y="207.2" font-size="4.5" text-anchor="middle" fill="#404040" letter-spacing="-0.3" stroke="#404040" stroke-width="0.12">46</text>
<text x="1117.69" y="207.2" font-size="4.5" text-anchor="middle" fill="#404040" letter-spacing="-0.3" stroke="#404040" stroke-width="0.12">47</text>
<text x="1125.38" y="207.2" font-size="4.5" text-anchor="middle" fill="#404040" letter-spacing="-0.3" stroke="#404040" stroke-width="0.12">48</text>
<text x="1133.07" y="207.2" font-size="4.5" text-anchor="middle" fill="#404040" letter-spacing="-0.3" stroke="#404040" stroke-width="0.12">49</text>
<text x="1140.76" y="207.2" font-size="4.5" text-anchor="middle" fill="#404040" letter-spacing="-0.3" stroke="#404040" stroke-width="0.12">50</text>
<text x="1148.44" y="207.2" font-size="4.5" text-anchor="middle" fill="#404040" letter-spacing="-0.3" stroke="#404040" stroke-width="0.12">51</text>
<text x="1156.13" y="207.2" font-size="4.5" text-anchor="middle" fill="#404040" letter-spacing="-0.3" stroke="#404040" stroke-width="0.12">52</text>
<text x="1163.82" y="207.2" font-size="4.5" text-anchor="middle" fill="#404040" letter-spacing="-0.3" stroke="#404040" stroke-width="0.12">53</text>
<text x="1171.51" y="207.2" font-size="4.5" text-anchor="middle" fill="#404040" letter-spacing="-0.3" stroke="#404040" stroke-width="0.12">54</text>
<text x="1179.20" y="207.2" font-size="4.5" text-anchor="middle" fill="#404040" letter-spacing="-0.3" stroke="#404040" stroke-width="0.12">55</text>
<text x="1186.88" y="207.2" font-size="4.5" text-anchor="middle" fill="#404040" letter-spacing="-0.3" stroke="#404040" stroke-width="0.12">56</text>
<text x="1194.57" y="207.2" font-size="4.5" text-anchor="middle" fill="#404040" letter-spacing="-0.3" stroke="#404040" stroke-width="0.12">57</text>
<text x="1202.26" y="207.2" font-size="4.5" text-anchor="middle" fill="#404040" letter-spacing="-0.3" stroke="#404040" stroke-width="0.12">58</text>
<text x="1209.95" y="207.2" font-size="4.5" text-anchor="middle" fill="#404040" letter-spacing="-0.3" stroke="#404040" stroke-width="0.12">59</text>
<text x="1217.64" y="207.2" font-size="4.5" text-anchor="middle" fill="#404040" letter-spacing="-0.3" stroke="#404040" stroke-width="0.12">60</text>
<text x="761" y="199.6" font-size="5" font-weight="bold" fill="#555" letter-spacing="-0.2">PERIODS</text>
<text x="549.5" y="220.39" font-size="5.8" fill="#3a3a3a" stroke="#3a3a3a" stroke-width="0.22" letter-spacing="0.05">Activity 01</text>
<text x="606.8" y="221.29" font-size="4.8" text-anchor="middle" fill="#707070">1</text>
<text x="639" y="221.29" font-size="4.8" text-anchor="middle" fill="#707070">5</text>
<text x="670.3" y="221.29" font-size="4.8" text-anchor="middle" fill="#707070">1</text>
<text x="701.6" y="221.29" font-size="4.8" text-anchor="middle" fill="#707070">4</text>
<text x="738.8" y="217.69" font-size="4.8" text-anchor="middle" fill="#555">25%</text>
<text x="549.5" y="234.58" font-size="5.8" fill="#3a3a3a" stroke="#3a3a3a" stroke-width="0.22" letter-spacing="0.05">Activity 02</text>
<text x="606.8" y="235.48" font-size="4.8" text-anchor="middle" fill="#707070">1</text>
<text x="639" y="235.48" font-size="4.8" text-anchor="middle" fill="#707070">6</text>
<text x="670.3" y="235.48" font-size="4.8" text-anchor="middle" fill="#707070">1</text>
<text x="738.8" y="231.88" font-size="4.8" text-anchor="middle" fill="#555">100%</text>
<text x="549.5" y="248.77" font-size="5.8" fill="#3a3a3a" stroke="#3a3a3a" stroke-width="0.22" letter-spacing="0.05">Activity 03</text>
<text x="606.8" y="249.67" font-size="4.8" text-anchor="middle" fill="#707070">2</text>
<text x="639" y="249.67" font-size="4.8" text-anchor="middle" fill="#707070">4</text>
<text x="670.3" y="249.67" font-size="4.8" text-anchor="middle" fill="#707070">2</text>
<text x="701.6" y="249.67" font-size="4.8" text-anchor="middle" fill="#707070">5</text>
<text x="738.8" y="246.07" font-size="4.8" text-anchor="middle" fill="#555">35%</text>
<text x="549.5" y="262.96" font-size="5.8" fill="#3a3a3a" stroke="#3a3a3a" stroke-width="0.22" letter-spacing="0.05">Activity 04</text>
<text x="606.8" y="263.86" font-size="4.8" text-anchor="middle" fill="#707070">4</text>
<text x="639" y="263.86" font-size="4.8" text-anchor="middle" fill="#707070">8</text>
<text x="670.3" y="263.86" font-size="4.8" text-anchor="middle" fill="#707070">4</text>
<text x="701.6" y="263.86" font-size="4.8" text-anchor="middle" fill="#707070">6</text>
<text x="738.8" y="260.26" font-size="4.8" text-anchor="middle" fill="#555">10%</text>
<text x="549.5" y="277.16" font-size="5.8" fill="#3a3a3a" stroke="#3a3a3a" stroke-width="0.22" letter-spacing="0.05">Activity 05</text>
<text x="606.8" y="278.06" font-size="4.8" text-anchor="middle" fill="#707070">4</text>
<text x="639" y="278.06" font-size="4.8" text-anchor="middle" fill="#707070">2</text>
<text x="670.3" y="278.06" font-size="4.8" text-anchor="middle" fill="#707070">4</text>
<text x="701.6" y="278.06" font-size="4.8" text-anchor="middle" fill="#707070">8</text>
<text x="738.8" y="274.46" font-size="4.8" text-anchor="middle" fill="#555">85%</text>
<text x="549.5" y="291.35" font-size="5.8" fill="#3a3a3a" stroke="#3a3a3a" stroke-width="0.22" letter-spacing="0.05">Activity 06</text>
<text x="606.8" y="292.25" font-size="4.8" text-anchor="middle" fill="#707070">4</text>
<text x="639" y="292.25" font-size="4.8" text-anchor="middle" fill="#707070">3</text>
<text x="670.3" y="292.25" font-size="4.8" text-anchor="middle" fill="#707070">4</text>
<text x="701.6" y="292.25" font-size="4.8" text-anchor="middle" fill="#707070">6</text>
<text x="738.8" y="288.65" font-size="4.8" text-anchor="middle" fill="#555">85%</text>
<text x="549.5" y="305.54" font-size="5.8" fill="#3a3a3a" stroke="#3a3a3a" stroke-width="0.22" letter-spacing="0.05">Activity 07</text>
<text x="606.8" y="306.44" font-size="4.8" text-anchor="middle" fill="#707070">5</text>
<text x="639" y="306.44" font-size="4.8" text-anchor="middle" fill="#707070">4</text>
<text x="670.3" y="306.44" font-size="4.8" text-anchor="middle" fill="#707070">5</text>
<text x="701.6" y="306.44" font-size="4.8" text-anchor="middle" fill="#707070">3</text>
<text x="738.8" y="302.84" font-size="4.8" text-anchor="middle" fill="#555">50%</text>
<text x="549.5" y="319.73" font-size="5.8" fill="#3a3a3a" stroke="#3a3a3a" stroke-width="0.22" letter-spacing="0.05">Activity 08</text>
<text x="606.8" y="320.62" font-size="4.8" text-anchor="middle" fill="#707070">5</text>
<text x="639" y="320.62" font-size="4.8" text-anchor="middle" fill="#707070">2</text>
<text x="670.3" y="320.62" font-size="4.8" text-anchor="middle" fill="#707070">5</text>
<text x="701.6" y="320.62" font-size="4.8" text-anchor="middle" fill="#707070">5</text>
<text x="738.8" y="317.03" font-size="4.8" text-anchor="middle" fill="#555">60%</text>
<text x="549.5" y="333.92" font-size="5.8" fill="#3a3a3a" stroke="#3a3a3a" stroke-width="0.22" letter-spacing="0.05">Activity 09</text>
<text x="606.8" y="334.81" font-size="4.8" text-anchor="middle" fill="#707070">5</text>
<text x="639" y="334.81" font-size="4.8" text-anchor="middle" fill="#707070">2</text>
<text x="670.3" y="334.81" font-size="4.8" text-anchor="middle" fill="#707070">5</text>
<text x="701.6" y="334.81" font-size="4.8" text-anchor="middle" fill="#707070">6</text>
<text x="738.8" y="331.22" font-size="4.8" text-anchor="middle" fill="#555">75%</text>
<text x="549.5" y="348.11" font-size="5.8" fill="#3a3a3a" stroke="#3a3a3a" stroke-width="0.22" letter-spacing="0.05">Activity 10</text>
<text x="606.8" y="349.00" font-size="4.8" text-anchor="middle" fill="#707070">6</text>
<text x="639" y="349.00" font-size="4.8" text-anchor="middle" fill="#707070">5</text>
<text x="670.3" y="349.00" font-size="4.8" text-anchor="middle" fill="#707070">6</text>
<text x="701.6" y="349.00" font-size="4.8" text-anchor="middle" fill="#707070">7</text>
<text x="738.8" y="345.41" font-size="4.8" text-anchor="middle" fill="#555">100%</text>
<text x="549.5" y="362.30" font-size="5.8" fill="#3a3a3a" stroke="#3a3a3a" stroke-width="0.22" letter-spacing="0.05">Activity 11</text>
<text x="606.8" y="363.19" font-size="4.8" text-anchor="middle" fill="#707070">6</text>
<text x="639" y="363.19" font-size="4.8" text-anchor="middle" fill="#707070">1</text>
<text x="670.3" y="363.19" font-size="4.8" text-anchor="middle" fill="#707070">5</text>
<text x="701.6" y="363.19" font-size="4.8" text-anchor="middle" fill="#707070">8</text>
<text x="738.8" y="359.60" font-size="4.8" text-anchor="middle" fill="#555">60%</text>
<text x="549.5" y="376.49" font-size="5.8" fill="#3a3a3a" stroke="#3a3a3a" stroke-width="0.22" letter-spacing="0.05">Activity 12</text>
<text x="606.8" y="377.38" font-size="4.8" text-anchor="middle" fill="#707070">9</text>
<text x="639" y="377.38" font-size="4.8" text-anchor="middle" fill="#707070">3</text>
<text x="670.3" y="377.38" font-size="4.8" text-anchor="middle" fill="#707070">9</text>
<text x="701.6" y="377.38" font-size="4.8" text-anchor="middle" fill="#707070">3</text>
<text x="738.8" y="373.79" font-size="4.8" text-anchor="middle" fill="#555">0%</text>
<text x="549.5" y="390.68" font-size="5.8" fill="#3a3a3a" stroke="#3a3a3a" stroke-width="0.22" letter-spacing="0.05">Activity 13</text>
<text x="606.8" y="391.57" font-size="4.8" text-anchor="middle" fill="#707070">9</text>
<text x="639" y="391.57" font-size="4.8" text-anchor="middle" fill="#707070">6</text>
<text x="670.3" y="391.57" font-size="4.8" text-anchor="middle" fill="#707070">9</text>
<text x="701.6" y="391.57" font-size="4.8" text-anchor="middle" fill="#707070">7</text>
<text x="738.8" y="387.98" font-size="4.8" text-anchor="middle" fill="#555">50%</text>
<text x="549.5" y="404.87" font-size="5.8" fill="#3a3a3a" stroke="#3a3a3a" stroke-width="0.22" letter-spacing="0.05">Activity 14</text>
<text x="606.8" y="405.76" font-size="4.8" text-anchor="middle" fill="#707070">9</text>
<text x="639" y="405.76" font-size="4.8" text-anchor="middle" fill="#707070">3</text>
<text x="670.3" y="405.76" font-size="4.8" text-anchor="middle" fill="#707070">9</text>
<text x="701.6" y="405.76" font-size="4.8" text-anchor="middle" fill="#707070">1</text>
<text x="738.8" y="402.17" font-size="4.8" text-anchor="middle" fill="#555">0%</text>
<text x="549.5" y="419.06" font-size="5.8" fill="#3a3a3a" stroke="#3a3a3a" stroke-width="0.22" letter-spacing="0.05">Activity 15</text>
<text x="606.8" y="419.95" font-size="4.8" text-anchor="middle" fill="#707070">9</text>
<text x="639" y="419.95" font-size="4.8" text-anchor="middle" fill="#707070">4</text>
<text x="670.3" y="419.95" font-size="4.8" text-anchor="middle" fill="#707070">8</text>
<text x="701.6" y="419.95" font-size="4.8" text-anchor="middle" fill="#707070">5</text>
<text x="738.8" y="416.36" font-size="4.8" text-anchor="middle" fill="#555">1%</text>
<text x="549.5" y="433.25" font-size="5.8" fill="#3a3a3a" stroke="#3a3a3a" stroke-width="0.22" letter-spacing="0.05">Activity 16</text>
<text x="606.8" y="434.14" font-size="4.8" text-anchor="middle" fill="#707070">10</text>
<text x="639" y="434.14" font-size="4.8" text-anchor="middle" fill="#707070">5</text>
<text x="670.3" y="434.14" font-size="4.8" text-anchor="middle" fill="#707070">10</text>
<text x="701.6" y="434.14" font-size="4.8" text-anchor="middle" fill="#707070">3</text>
<text x="738.8" y="430.55" font-size="4.8" text-anchor="middle" fill="#555">80%</text>
<text x="549.5" y="447.44" font-size="5.8" fill="#3a3a3a" stroke="#3a3a3a" stroke-width="0.22" letter-spacing="0.05">Activity 17</text>
<text x="606.8" y="448.33" font-size="4.8" text-anchor="middle" fill="#707070">11</text>
<text x="639" y="448.33" font-size="4.8" text-anchor="middle" fill="#707070">2</text>
<text x="670.3" y="448.33" font-size="4.8" text-anchor="middle" fill="#707070">11</text>
<text x="701.6" y="448.33" font-size="4.8" text-anchor="middle" fill="#707070">5</text>
<text x="738.8" y="444.74" font-size="4.8" text-anchor="middle" fill="#555">0%</text>
<text x="549.5" y="461.62" font-size="5.8" fill="#3a3a3a" stroke="#3a3a3a" stroke-width="0.22" letter-spacing="0.05">Activity 18</text>
<text x="606.8" y="462.52" font-size="4.8" text-anchor="middle" fill="#707070">12</text>
<text x="639" y="462.52" font-size="4.8" text-anchor="middle" fill="#707070">6</text>
<text x="670.3" y="462.52" font-size="4.8" text-anchor="middle" fill="#707070">12</text>
<text x="701.6" y="462.52" font-size="4.8" text-anchor="middle" fill="#707070">7</text>
<text x="738.8" y="458.93" font-size="4.8" text-anchor="middle" fill="#555">0%</text>
<text x="549.5" y="475.81" font-size="5.8" fill="#3a3a3a" stroke="#3a3a3a" stroke-width="0.22" letter-spacing="0.05">Activity 19</text>
<text x="606.8" y="476.71" font-size="4.8" text-anchor="middle" fill="#707070">12</text>
<text x="639" y="476.71" font-size="4.8" text-anchor="middle" fill="#707070">1</text>
<text x="670.3" y="476.71" font-size="4.8" text-anchor="middle" fill="#707070">12</text>
<text x="701.6" y="476.71" font-size="4.8" text-anchor="middle" fill="#707070">5</text>
<text x="738.8" y="473.12" font-size="4.8" text-anchor="middle" fill="#555">0%</text>
<text x="549.5" y="490.01" font-size="5.8" fill="#3a3a3a" stroke="#3a3a3a" stroke-width="0.22" letter-spacing="0.05">Activity 20</text>
<text x="606.8" y="490.91" font-size="4.8" text-anchor="middle" fill="#707070">14</text>
<text x="639" y="490.91" font-size="4.8" text-anchor="middle" fill="#707070">5</text>
<text x="670.3" y="490.91" font-size="4.8" text-anchor="middle" fill="#707070">14</text>
<text x="701.6" y="490.91" font-size="4.8" text-anchor="middle" fill="#707070">6</text>
<text x="738.8" y="487.31" font-size="4.8" text-anchor="middle" fill="#555">0%</text>
<text x="549.5" y="504.19" font-size="5.8" fill="#3a3a3a" stroke="#3a3a3a" stroke-width="0.22" letter-spacing="0.05">Activity 21</text>
<text x="606.8" y="505.09" font-size="4.8" text-anchor="middle" fill="#707070">14</text>
<text x="639" y="505.09" font-size="4.8" text-anchor="middle" fill="#707070">8</text>
<text x="670.3" y="505.09" font-size="4.8" text-anchor="middle" fill="#707070">14</text>
<text x="701.6" y="505.09" font-size="4.8" text-anchor="middle" fill="#707070">2</text>
<text x="738.8" y="501.50" font-size="4.8" text-anchor="middle" fill="#555">44%</text>
<text x="549.5" y="518.39" font-size="5.8" fill="#3a3a3a" stroke="#3a3a3a" stroke-width="0.22" letter-spacing="0.05">Activity 22</text>
<text x="606.8" y="519.29" font-size="4.8" text-anchor="middle" fill="#707070">14</text>
<text x="639" y="519.29" font-size="4.8" text-anchor="middle" fill="#707070">7</text>
<text x="670.3" y="519.29" font-size="4.8" text-anchor="middle" fill="#707070">14</text>
<text x="701.6" y="519.29" font-size="4.8" text-anchor="middle" fill="#707070">3</text>
<text x="738.8" y="515.69" font-size="4.8" text-anchor="middle" fill="#555">0%</text>
<text x="549.5" y="532.58" font-size="5.8" fill="#3a3a3a" stroke="#3a3a3a" stroke-width="0.22" letter-spacing="0.05">Activity 23</text>
<text x="606.8" y="533.48" font-size="4.8" text-anchor="middle" fill="#707070">15</text>
<text x="639" y="533.48" font-size="4.8" text-anchor="middle" fill="#707070">4</text>
<text x="670.3" y="533.48" font-size="4.8" text-anchor="middle" fill="#707070">15</text>
<text x="701.6" y="533.48" font-size="4.8" text-anchor="middle" fill="#707070">8</text>
<text x="738.8" y="529.88" font-size="4.8" text-anchor="middle" fill="#555">12%</text>
<text x="549.5" y="546.77" font-size="5.8" fill="#3a3a3a" stroke="#3a3a3a" stroke-width="0.22" letter-spacing="0.05">Activity 24</text>
<text x="606.8" y="547.67" font-size="4.8" text-anchor="middle" fill="#707070">15</text>
<text x="639" y="547.67" font-size="4.8" text-anchor="middle" fill="#707070">5</text>
<text x="670.3" y="547.67" font-size="4.8" text-anchor="middle" fill="#707070">15</text>
<text x="701.6" y="547.67" font-size="4.8" text-anchor="middle" fill="#707070">3</text>
<text x="738.8" y="544.07" font-size="4.8" text-anchor="middle" fill="#555">5%</text>
<text x="549.5" y="560.96" font-size="5.8" fill="#3a3a3a" stroke="#3a3a3a" stroke-width="0.22" letter-spacing="0.05">Activity 25</text>
<text x="606.8" y="561.86" font-size="4.8" text-anchor="middle" fill="#707070">15</text>
<text x="639" y="561.86" font-size="4.8" text-anchor="middle" fill="#707070">8</text>
<text x="670.3" y="561.86" font-size="4.8" text-anchor="middle" fill="#707070">15</text>
<text x="701.6" y="561.86" font-size="4.8" text-anchor="middle" fill="#707070">5</text>
<text x="738.8" y="558.25" font-size="4.8" text-anchor="middle" fill="#555">0%</text>
<text x="549.5" y="575.15" font-size="5.8" fill="#3a3a3a" stroke="#3a3a3a" stroke-width="0.22" letter-spacing="0.05">Activity 26</text>
<text x="606.8" y="576.05" font-size="4.8" text-anchor="middle" fill="#707070">16</text>
<text x="639" y="576.05" font-size="4.8" text-anchor="middle" fill="#707070">29</text>
<text x="670.3" y="576.05" font-size="4.8" text-anchor="middle" fill="#707070">16</text>
<text x="701.6" y="576.05" font-size="4.8" text-anchor="middle" fill="#707070">30</text>
<text x="738.8" y="572.45" font-size="4.8" text-anchor="middle" fill="#555">50%</text>
<text x="549.7" y="197.0" font-size="5" text-anchor="start" fill="#555" letter-spacing="-0.15">ACTIVITY</text>
<text x="606.8" y="197.0" font-size="5" text-anchor="middle" fill="#555" letter-spacing="-0.15">PLAN START</text>
<text x="639" y="193.6" font-size="5" text-anchor="middle" fill="#555" letter-spacing="-0.15">PLAN</text>
<text x="639" y="200.1" font-size="5" text-anchor="middle" fill="#555" letter-spacing="-0.15">DURATION</text>
<text x="670.5" y="193.6" font-size="5" text-anchor="middle" fill="#555" letter-spacing="-0.15">ACTUAL</text>
<text x="672" y="200.1" font-size="5" text-anchor="middle" fill="#555" letter-spacing="-0.15">START</text>
<text x="702" y="193.6" font-size="5" text-anchor="middle" fill="#555" letter-spacing="-0.15">ACTUAL</text>
<text x="702" y="200.1" font-size="5" text-anchor="middle" fill="#555" letter-spacing="-0.15">DURATION</text>
<text x="739" y="193.6" font-size="5" text-anchor="middle" fill="#555" letter-spacing="-0.15">PERCENT</text>
<text x="739" y="200.1" font-size="5" text-anchor="middle" fill="#555" letter-spacing="-0.15">COMPLETE</text>
<text x="551.5" y="165" font-size="18.6" fill="#6b5369" stroke="#6b5369" stroke-width="0.55" letter-spacing="0.15">Project Planner</text>
<text x="550" y="179" font-size="4.85" font-style="italic" fill="#666" letter-spacing="0">Select a period to highlight at right.  A legend describing the charting follows.</text>
<rect x="717.3" y="171.5" width="50.5" height="11.2" fill="#f5d9a6" stroke="#d9b77a" stroke-width="0.8"/>
<text x="720" y="178.8" font-size="4.6" font-weight="bold" fill="#333">Period Highlight:</text>
<text x="763" y="179.3" font-size="4.6" fill="#333">1</text>
<rect x="776.5" y="172.5" width="6" height="8.5" fill="url(#pLeg)"/>
<text x="785" y="178.5" font-size="5.0" fill="#666">Plan Duration</text>
<rect x="822" y="172.5" width="7" height="8.5" fill="url(#pL)"/>
<text x="831" y="178.5" font-size="5.0" fill="#666">Actual Start</text>
<rect x="861.5" y="172.5" width="5.3" height="8.5" fill="#6f5371"/>
<text x="869" y="178.5" font-size="5.0" fill="#666">% Complete</text>
<rect x="899.5" y="172.5" width="6.5" height="8.5" fill="url(#pH)"/>
<text x="908" y="178.5" font-size="5.0" fill="#666">Actual (beyond plan)</text>
<rect x="961" y="172.5" width="5.7" height="8.5" fill="#e9aa45"/>
<text x="969" y="178.5" font-size="5.0" fill="#666">% Complete (beyond plan)</text>
</svg>
</body></html>
